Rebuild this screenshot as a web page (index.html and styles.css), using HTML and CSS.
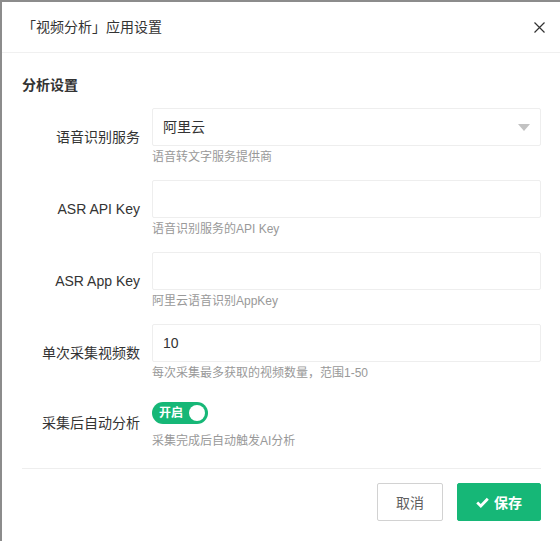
FILE: index.html
```html
<!DOCTYPE html>
<html lang="zh-CN">
<head>
<meta charset="utf-8">
<title>「视频分析」应用设置</title>
<link rel="stylesheet" href="styles.css">
</head>
<body>
<div class="dialog">
  <div class="dialog-header">
    <span class="dialog-title">「视频分析」应用设置</span>
    <span class="close">
      <svg width="11" height="11" viewBox="0 0 11 11"><path d="M0.5 0.5 L10.5 10.5 M10.5 0.5 L0.5 10.5" stroke="#333" stroke-width="1.2" fill="none"/></svg>
    </span>
  </div>
  <div class="dialog-body">
    <div class="section-title">分析设置</div>

    <div class="form-item">
      <label class="form-label">语音识别服务</label>
      <div class="form-block">
        <div class="input select">阿里云<span class="caret"></span></div>
        <div class="aux">语音转文字服务提供商</div>
      </div>
    </div>

    <div class="form-item">
      <label class="form-label">ASR API Key</label>
      <div class="form-block">
        <div class="input"></div>
        <div class="aux">语音识别服务的API Key</div>
      </div>
    </div>

    <div class="form-item">
      <label class="form-label">ASR App Key</label>
      <div class="form-block">
        <div class="input"></div>
        <div class="aux">阿里云语音识别AppKey</div>
      </div>
    </div>

    <div class="form-item">
      <label class="form-label">单次采集视频数</label>
      <div class="form-block">
        <div class="input">10</div>
        <div class="aux">每次采集最多获取的视频数量，范围1-50</div>
      </div>
    </div>

    <div class="form-item">
      <label class="form-label">采集后自动分析</label>
      <div class="form-block">
        <div class="switch-wrap"><span class="switch"><em>开启</em><i></i></span></div>
        <div class="aux">采集完成后自动触发AI分析</div>
      </div>
    </div>

    <div class="divider"></div>

    <div class="actions">
      <button class="btn btn-default">取消</button>
      <button class="btn btn-primary"><svg width="13" height="11" viewBox="0 0 13 11"><path d="M1.2 5.6 L4.8 9 L11.8 1.8" stroke="#fff" stroke-width="2.8" fill="none"/></svg>保存</button>
    </div>
  </div>
</div>
</body>
</html>
```

FILE: styles.css
```css
html, body {
  margin: 0;
  padding: 0;
}
body {
  width: 560px;
  height: 541px;
  overflow: hidden;
  background: #8c8c8c;
  font-family: "Liberation Sans", "Noto Sans CJK SC", sans-serif;
  color: #333;
  font-size: 14px;
}
.dialog {
  margin: 2px 0 0 2px;
  width: 559px;
  height: 560px;
  background: #fff;
  box-sizing: border-box;
}
.dialog-header {
  height: 51px;
  border-bottom: 1px solid #f0f0f0;
  box-sizing: border-box;
  display: flex;
  align-items: center;
  justify-content: space-between;
  padding: 0 16px 0 20px;
}
.dialog-title {
  font-size: 14px;
  color: #333;
  line-height: 20px;
}
.close {
  display: flex;
  width: 11px;
  height: 11px;
}
.dialog-body {
  padding: 22px 20px 0 20px;
}
.section-title {
  font-weight: bold;
  font-size: 14px;
  line-height: 20px;
  height: 20px;
  margin-bottom: 13px;
}
.form-item {
  display: flex;
  align-items: center;
  margin-bottom: 14px;
}
.form-label {
  width: 118px;
  text-align: right;
  padding-right: 12px;
  font-size: 14px;
  line-height: 20px;
  color: #333;
  flex: none;
}
.form-block {
  flex: 1;
}
.input {
  height: 38px;
  border: 1px solid #eee;
  border-radius: 2px;
  box-sizing: border-box;
  padding-left: 10px;
  line-height: 36px;
  font-size: 14px;
  color: #333;
  position: relative;
}
.caret {
  position: absolute;
  right: 10px;
  top: 15px;
  width: 0;
  height: 0;
  border-left: 6px solid transparent;
  border-right: 6px solid transparent;
  border-top: 7px solid #c2c2c2;
}
.aux {
  font-size: 12px;
  line-height: 18px;
  color: #999;
  margin-top: 2px;
}
.switch-wrap {
  height: 34px;
  display: flex;
  align-items: flex-start;
  padding-top: 6px;
  box-sizing: border-box;
}
.switch {
  display: inline-flex;
  align-items: center;
  height: 22px;
  width: 56px;
  box-sizing: border-box;
  background: #16b777;
  border-radius: 12px;
  padding: 0 3px 0 7px;
  justify-content: space-between;
}
.switch em {
  font-style: normal;
  color: #fff;
  font-weight: bold;
  font-size: 12px;
  line-height: 16px;
}
.switch i {
  width: 16px;
  height: 16px;
  border-radius: 50%;
  background: #fff;
  display: block;
}
.divider {
  height: 1px;
  background: #eee;
  margin-top: 18px;
}
.actions {
  display: flex;
  justify-content: flex-end;
  gap: 14px;
  margin-top: 14px;
}
.btn {
  height: 38px;
  box-sizing: border-box;
  border-radius: 2px;
  font-family: inherit;
  font-size: 14px;
  padding: 0 18px;
  display: inline-flex;
  align-items: center;
  cursor: pointer;
}
.btn-default {
  background: #fff;
  border: 1px solid #d2d2d2;
  color: #5f5f5f;
}
.btn-primary {
  background: #16b777;
  border: 1px solid #16b777;
  color: #fff;
  font-weight: bold;
  gap: 5px;
  padding: 0 18px 0 18px;
}
```
